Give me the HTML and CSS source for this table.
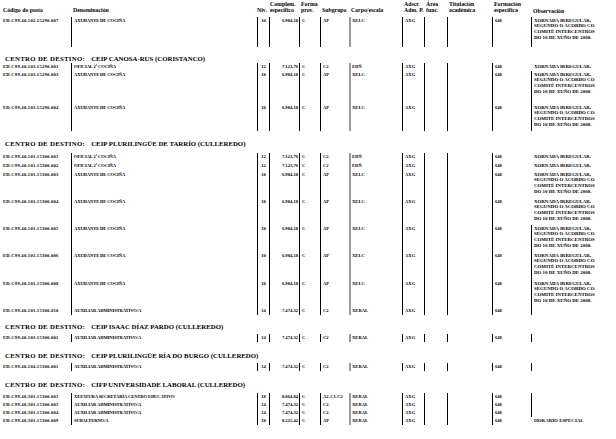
FILE: index.html
```html
<!DOCTYPE html>
<html lang="gl">
<head>
<meta charset="utf-8">
<title>Relación de postos</title>
<link rel="stylesheet" href="styles.css">
</head>
<body>
<div class="page">
  <div class="grid head">
    <div class="h">Código do posto</div>
    <div class="h">Denominación</div>
    <div class="h">Niv.</div>
    <div class="h hc">Complem.<br>específico</div>
    <div class="h">Forma<br>prov.</div>
    <div class="h">Subgrupo</div>
    <div class="h">Corpo/escala</div>
    <div class="h">Adscr.<br>Adm. P.</div>
    <div class="h">Área<br>func.</div>
    <div class="h">Titulación<br>académica</div>
    <div class="h">Formación<br>específica</div>
    <div class="h ho">Observación</div>
  </div>

  <div class="tbl first">
    <div class="grid row r6">
      <div class="c code">ED.C99.40.102.15290.007</div><div class="c den">AXUDANTE DE COCIÑA</div><div class="c niv">10</div><div class="c cmp">6.984,18</div><div class="c">C</div><div class="c">AP</div><div class="c corpo">XELC</div><div class="c">AXG</div><div class="c"></div><div class="c"></div><div class="c">648</div><div class="c obs">XORNADA IRREGULAR,<br>SEGUNDO O ACORDO CO<br>COMITÉ INTERCENTROS<br>DO 10 DE XUÑO DE 2008.</div>
    </div>
  </div>

  <section class="centro">
    <h2 class="title t-canosa"><span class="lbl">CENTRO DE DESTINO:</span><span>CEIP CANOSA-RUS (CORISTANCO)</span></h2>
    <div class="tbl">
      <div class="grid row">
        <div class="c code">ED.C99.40.103.15290.001</div><div class="c den">OFICIAL 2ª COCIÑA</div><div class="c niv">12</div><div class="c cmp">7.123,76</div><div class="c">C</div><div class="c">C2</div><div class="c corpo">EDÑ</div><div class="c">AXG</div><div class="c"></div><div class="c"></div><div class="c">648</div><div class="c obs nb">XORNADA IRREGULAR.</div>
      </div>
      <div class="grid row r5">
        <div class="c code">ED.C99.40.103.15290.003</div><div class="c den">AXUDANTE DE COCIÑA</div><div class="c niv">10</div><div class="c cmp">6.984,18</div><div class="c">C</div><div class="c">AP</div><div class="c corpo">XELC</div><div class="c">AXG</div><div class="c"></div><div class="c"></div><div class="c">648</div><div class="c obs">XORNADA IRREGULAR,<br>SEGUNDO O ACORDO CO<br>COMITÉ INTERCENTROS<br>DO 10 DE XUÑO DE 2008.</div>
      </div>
      <div class="grid row r4">
        <div class="c code">ED.C99.40.103.15290.004</div><div class="c den">AXUDANTE DE COCIÑA</div><div class="c niv">10</div><div class="c cmp">6.984,18</div><div class="c">C</div><div class="c">AP</div><div class="c corpo">XELC</div><div class="c">AXG</div><div class="c"></div><div class="c"></div><div class="c">648</div><div class="c obs">XORNADA IRREGULAR,<br>SEGUNDO O ACORDO CO<br>COMITÉ INTERCENTROS<br>DO 10 DE XUÑO DE 2008.</div>
      </div>
    </div>
  </section>

  <section class="centro">
    <h2 class="title t-tarrio"><span class="lbl">CENTRO DE DESTINO:</span><span>CEIP PLURILINGÜE DE TARRÍO (CULLEREDO)</span></h2>
    <div class="tbl">
      <div class="grid row r1">
        <div class="c code">ED.C99.40.101.15300.001</div><div class="c den">OFICIAL 2ª COCIÑA</div><div class="c niv">12</div><div class="c cmp">7.123,76</div><div class="c">C</div><div class="c">C2</div><div class="c corpo">EDÑ</div><div class="c">AXG</div><div class="c"></div><div class="c"></div><div class="c">648</div><div class="c obs nb">XORNADA IRREGULAR.</div>
      </div>
      <div class="grid row r1">
        <div class="c code">ED.C99.40.101.15300.002</div><div class="c den">OFICIAL 2ª COCIÑA</div><div class="c niv">12</div><div class="c cmp">7.123,76</div><div class="c">C</div><div class="c">C2</div><div class="c corpo">EDÑ</div><div class="c">AXG</div><div class="c"></div><div class="c"></div><div class="c">648</div><div class="c obs nb">XORNADA IRREGULAR.</div>
      </div>
      <div class="grid row r4">
        <div class="c code">ED.C99.40.101.15300.003</div><div class="c den">AXUDANTE DE COCIÑA</div><div class="c niv">10</div><div class="c cmp">6.984,18</div><div class="c">C</div><div class="c">AP</div><div class="c corpo">XELC</div><div class="c">AXG</div><div class="c"></div><div class="c"></div><div class="c">648</div><div class="c obs nb">XORNADA IRREGULAR,<br>SEGUNDO O ACORDO CO<br>COMITÉ INTERCENTROS<br>DO 10 DE XUÑO DE 2008.</div>
      </div>
      <div class="grid row r4">
        <div class="c code">ED.C99.40.101.15300.004</div><div class="c den">AXUDANTE DE COCIÑA</div><div class="c niv">10</div><div class="c cmp">6.984,18</div><div class="c">C</div><div class="c">AP</div><div class="c corpo">XELC</div><div class="c">AXG</div><div class="c"></div><div class="c"></div><div class="c">648</div><div class="c obs nb">XORNADA IRREGULAR,<br>SEGUNDO O ACORDO CO<br>COMITÉ INTERCENTROS<br>DO 10 DE XUÑO DE 2008.</div>
      </div>
      <div class="grid row r4">
        <div class="c code">ED.C99.40.101.15300.005</div><div class="c den">AXUDANTE DE COCIÑA</div><div class="c niv">10</div><div class="c cmp">6.984,18</div><div class="c">C</div><div class="c">AP</div><div class="c corpo">XELC</div><div class="c">AXG</div><div class="c"></div><div class="c"></div><div class="c">648</div><div class="c obs">XORNADA IRREGULAR,<br>SEGUNDO O ACORDO CO<br>COMITÉ INTERCENTROS<br>DO 10 DE XUÑO DE 2008.</div>
      </div>
      <div class="grid row r4x">
        <div class="c code">ED.C99.40.101.15300.006</div><div class="c den">AXUDANTE DE COCIÑA</div><div class="c niv">10</div><div class="c cmp">6.984,18</div><div class="c">C</div><div class="c">AP</div><div class="c corpo">XELC</div><div class="c">AXG</div><div class="c"></div><div class="c"></div><div class="c">648</div><div class="c obs">XORNADA IRREGULAR,<br>SEGUNDO O ACORDO CO<br>COMITÉ INTERCENTROS<br>DO 10 DE XUÑO DE 2008.</div>
      </div>
      <div class="grid row r4">
        <div class="c code">ED.C99.40.101.15300.008</div><div class="c den">AXUDANTE DE COCIÑA</div><div class="c niv">10</div><div class="c cmp">6.984,18</div><div class="c">C</div><div class="c">AP</div><div class="c corpo">XELC</div><div class="c">AXG</div><div class="c"></div><div class="c"></div><div class="c">648</div><div class="c obs">XORNADA IRREGULAR,<br>SEGUNDO O ACORDO CO<br>COMITÉ INTERCENTROS<br>DO 10 DE XUÑO DE 2008.</div>
      </div>
      <div class="grid row">
        <div class="c code">ED.C99.40.101.15300.010</div><div class="c den">AUXILIAR ADMINISTRATIVO/A</div><div class="c niv">14</div><div class="c cmp">7.474,32</div><div class="c">C</div><div class="c">C2</div><div class="c corpo">XERAL</div><div class="c">AXG</div><div class="c"></div><div class="c"></div><div class="c">648</div><div class="c obs"></div>
      </div>
    </div>
  </section>

  <section class="centro">
    <h2 class="title t-isaac"><span class="lbl">CENTRO DE DESTINO:</span><span>CEIP ISAAC DÍAZ PARDO (CULLEREDO)</span></h2>
    <div class="tbl">
      <div class="grid row">
        <div class="c code">ED.C99.40.103.15300.001</div><div class="c den">AUXILIAR ADMINISTRATIVO/A</div><div class="c niv">14</div><div class="c cmp">7.474,32</div><div class="c">C</div><div class="c">C2</div><div class="c corpo">XERAL</div><div class="c">AXG</div><div class="c"></div><div class="c"></div><div class="c">648</div><div class="c obs"></div>
      </div>
    </div>
  </section>

  <section class="centro">
    <h2 class="title"><span class="lbl">CENTRO DE DESTINO:</span><span>CEIP PLURILINGÜE RÍA DO BURGO (CULLEREDO)</span></h2>
    <div class="tbl">
      <div class="grid row">
        <div class="c code">ED.C99.40.104.15300.001</div><div class="c den">AUXILIAR ADMINISTRATIVO/A</div><div class="c niv">14</div><div class="c cmp">7.474,32</div><div class="c">C</div><div class="c">C2</div><div class="c corpo">XERAL</div><div class="c">AXG</div><div class="c"></div><div class="c"></div><div class="c">648</div><div class="c obs"></div>
      </div>
    </div>
  </section>

  <section class="centro">
    <h2 class="title t-univ"><span class="lbl">CENTRO DE DESTINO:</span><span>CIFP UNIVERSIDADE LABORAL (CULLEREDO)</span></h2>
    <div class="tbl">
      <div class="grid row">
        <div class="c code">ED.C99.40.301.15300.001</div><div class="c den">XEFATURA SECRETARÍA CENTRO EDUCATIVO</div><div class="c niv">18</div><div class="c cmp">8.064,84</div><div class="c">C</div><div class="c">A2-C1-C2</div><div class="c corpo">XERAL</div><div class="c">AXG</div><div class="c"></div><div class="c"></div><div class="c">648</div><div class="c obs"></div>
      </div>
      <div class="grid row">
        <div class="c code">ED.C99.40.301.15300.003</div><div class="c den">AUXILIAR ADMINISTRATIVO/A</div><div class="c niv">14</div><div class="c cmp">7.474,32</div><div class="c">C</div><div class="c">C2</div><div class="c corpo">XERAL</div><div class="c">AXG</div><div class="c"></div><div class="c"></div><div class="c">648</div><div class="c obs"></div>
      </div>
      <div class="grid row">
        <div class="c code">ED.C99.40.301.15300.004</div><div class="c den">AUXILIAR ADMINISTRATIVO/A</div><div class="c niv">14</div><div class="c cmp">7.474,32</div><div class="c">C</div><div class="c">C2</div><div class="c corpo">XERAL</div><div class="c">AXG</div><div class="c"></div><div class="c"></div><div class="c">648</div><div class="c obs"></div>
      </div>
      <div class="grid row">
        <div class="c code">ED.C99.40.301.15300.009</div><div class="c den">SUBALTERNO/A</div><div class="c niv">10</div><div class="c cmp">8.225,42</div><div class="c">C</div><div class="c">AP</div><div class="c corpo">XERAL</div><div class="c">AXG</div><div class="c"></div><div class="c"></div><div class="c">648</div><div class="c obs nb">HORARIO ESPECIAL</div>
      </div>
    </div>
  </section>
</div>
</body>
</html>
```

FILE: styles.css
```css
html, body {
  margin: 0;
  padding: 0;
  background: #ffffff;
  color: #000000;
}

.page {
  width: 616px;
  height: 439px;
  overflow: hidden;
  padding-top: 1px;
  box-sizing: border-box;
  font-family: "Liberation Serif", "Times New Roman", serif;
  font-weight: bold;
}

.grid {
  display: grid;
  grid-template-columns: 71px 186px 12px 30px 21px 29px 53px 22px 23px 45px 39px 85px;
}

/* header */
.head {
  height: 12px;
  align-items: end;
  font-size: 5.8px;
  line-height: 6px;
}
.h {
  white-space: nowrap;
  padding-left: 2px;
}
.h:first-child { padding-left: 3px; }
.head .h:nth-child(3) { padding-left: 0; }
.head .hc { padding-left: 1px; }
.head .ho { position: relative; top: 1px; }

/* rows */
.tbl.first { margin-top: 4px; }

.row {
  height: 8px;
  font-size: 4.6px;
  line-height: 5.7px;
}
.r1 { height: 9px; }
.r4 { height: 27px; }
.r4x { height: 28px; }
.r5 { height: 33px; }
.r6 { height: 30px; }

.c {
  border-left: 1px solid #000;
  padding: 0.5px 0 0 2px;
  white-space: nowrap;
  overflow: hidden;
}
.c.code {
  border-left: none;
  padding-left: 3px;
  letter-spacing: 0.25px;
}
.c.den { letter-spacing: -0.12px; }
.c.niv {
  text-align: center;
  padding-left: 0;
}
.c.cmp {
  text-align: right;
  padding: 0.5px 1px 0 0;
}
.c.corpo {
  border-left: 2px solid #9a9a9a;
  padding-left: 1px;
}
.c.nb { border-left-color: transparent; }
.c.obs {
  padding-left: 2px;
  font-size: 4.9px;
}

/* centre titles */
.title {
  margin: 10px 0 3px 5px;
  height: 8px;
  display: flex;
  gap: 6px;
  font-size: 6.8px;
  line-height: 8px;
  font-weight: bold;
  white-space: nowrap;
}
.title .lbl { letter-spacing: 0.3px; }
.t-canosa { margin: 8px 0 0 5px; }
.t-tarrio { margin: 9px 0 5px 5px; }
.t-isaac { margin: 8px 0 3px 5px; }
.t-univ { margin: 10px 0 4px 5px; }
```
